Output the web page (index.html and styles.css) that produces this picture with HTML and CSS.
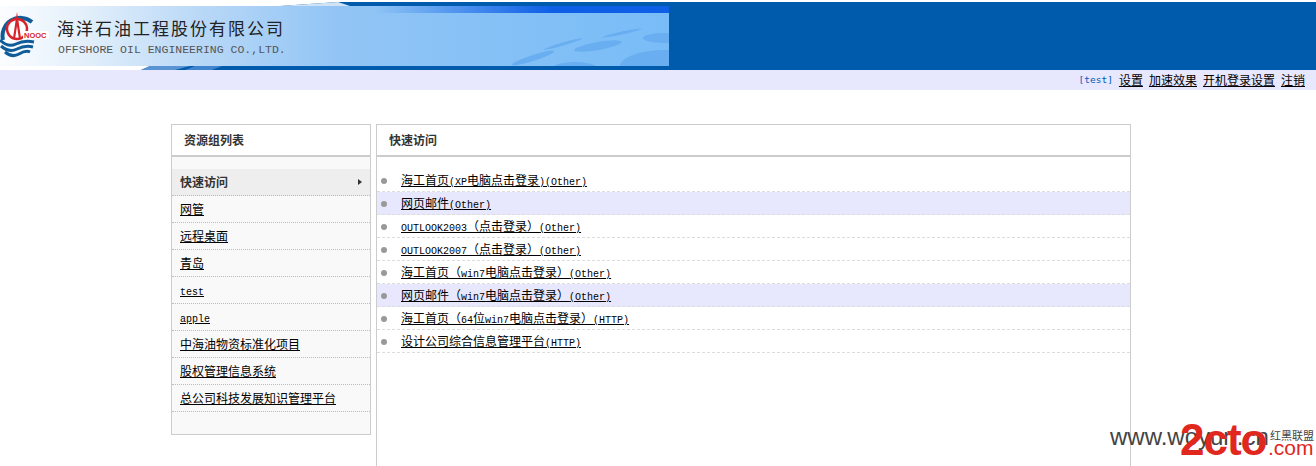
FILE: index.html
```html
<!DOCTYPE html>
<html lang="zh-cn">
<head>
    <meta charset="UTF-8">
    <title>海洋石油工程股份有限公司</title>
    <link rel="stylesheet" href="styles.css">
</head>
<body>
    <header class="top">
        <div class="banner">
            <svg class="banner-art" width="669" height="68" viewBox="0 0 669 68">
                <defs>
                    <linearGradient id="sky" x1="0" x2="1" y1="0" y2="0">
                        <stop offset="0" stop-color="#fbfdff"/>
                        <stop offset="0.12" stop-color="#e4f0fb"/>
                        <stop offset="0.3" stop-color="#b9d8f7"/>
                        <stop offset="0.5" stop-color="#92c5f5"/>
                        <stop offset="1" stop-color="#78bcf7"/>
                    </linearGradient>
                    <linearGradient id="strip" x1="0" x2="1" y1="0" y2="0">
                        <stop offset="0" stop-color="#0f5ee6" stop-opacity="0"/>
                        <stop offset="0.6" stop-color="#0f5ee6"/>
                        <stop offset="1" stop-color="#0f5ee6"/>
                    </linearGradient>
                </defs>
                <path d="M0 0H338L280 4H0Z" fill="#fff"/>
                <path d="M280 4L338 0 350 4Z" fill="#cfe3f5"/>
                <g transform="translate(0 4)">
                    <rect width="669" height="60" fill="url(#sky)"/>
                    <rect x="375" y="0" width="294" height="7" fill="url(#strip)"/>
                    <g fill="#68aef0">
                        <ellipse cx="665" cy="60" rx="45" ry="16"/>
                        <ellipse cx="598" cy="40" rx="24" ry="4" transform="rotate(-10 598 40)"/>
                        <ellipse cx="665" cy="32" rx="22" ry="5"/>
                        <ellipse cx="533" cy="52" rx="22" ry="3" transform="rotate(-18 533 52)"/>
                        <ellipse cx="575" cy="62" rx="22" ry="6"/>
                        <ellipse cx="563" cy="38" rx="20" ry="1.5" transform="rotate(-16 563 38)"/>
                        <ellipse cx="622" cy="27" rx="20" ry="1.5" transform="rotate(-12 622 27)"/>
                    </g>
                    <rect x="0" y="60" width="669" height="4" fill="#005bac"/>
                    <path d="M0 60H150L141 64H0Z" fill="#fff"/>
                    <path d="M150 60H190L175 64H141Z" fill="#5b94d2"/>
                    <path d="M195 60H222L212 64H185Z" fill="#3f84cc"/>
                </g>
            </svg>
            <svg class="logo" width="50" height="48" viewBox="0 0 50 48">
                <path d="M32 10A18 18 0 0 0 3 28" fill="none" stroke="#0f5c99" stroke-width="4"/>
                <circle cx="17" cy="17" r="10" fill="#fff" stroke="#d8232a" stroke-width="2.4"/>
                <path d="M17 0L18.6 10 21 26H18.8L17 14 15.2 26H13L15.4 10Z" fill="#d8232a"/>
                <path d="M0 28Q8 36 16 32T34 30" fill="none" stroke="#0f5c99" stroke-width="3"/>
                <path d="M1 34Q9 41 17 37T33 35" fill="none" stroke="#0f5c99" stroke-width="3"/>
                <path d="M5 40Q12 46 19 42T30 40" fill="none" stroke="#0f5c99" stroke-width="3"/>
                <rect x="23" y="19" width="26" height="8" fill="#fff"/>
                <text x="24" y="26" class="logo-text">NOOC</text>
            </svg>
            <div class="company">
                <div class="company-cn">海洋石油工程股份有限公司</div>
                <div class="company-en">OFFSHORE OIL ENGINEERING CO.,LTD.</div>
            </div>
        </div>
    </header>

    <nav class="userbar">
        <span class="user">[test]</span>
        <a href="#">设置</a>
        <a href="#">加速效果</a>
        <a href="#">开机登录设置</a>
        <a href="#">注销</a>
    </nav>

    <main class="content">
        <aside class="panel side">
            <h3 class="panel-title">资源组列表</h3>
            <ul class="group-list">
                <li class="active"><a href="#">快速访问</a><span class="arrow"></span></li>
                <li><a href="#">网管</a></li>
                <li><a href="#">远程桌面</a></li>
                <li><a href="#">青岛</a></li>
                <li><a href="#" class="en">test</a></li>
                <li><a href="#" class="en">apple</a></li>
                <li><a href="#">中海油物资标准化项目</a></li>
                <li><a href="#">股权管理信息系统</a></li>
                <li><a href="#">总公司科技发展知识管理平台</a></li>
            </ul>
        </aside>
        <section class="panel list">
            <h3 class="panel-title">快速访问</h3>
            <ul class="res-list">
                <li><a href="#">海工首页<span class="en">(XP</span>电脑点击登录<span class="en">)(Other)</span></a></li>
                <li class="alt"><a href="#">网页邮件<span class="en">(Other)</span></a></li>
                <li><a href="#"><span class="en">OUTLOOK2003</span>（点击登录）<span class="en">(Other)</span></a></li>
                <li><a href="#"><span class="en">OUTLOOK2007</span>（点击登录）<span class="en">(Other)</span></a></li>
                <li><a href="#">海工首页（<span class="en">win7</span>电脑点击登录）<span class="en">(Other)</span></a></li>
                <li class="alt"><a href="#">网页邮件（<span class="en">win7</span>电脑点击登录）<span class="en">(Other)</span></a></li>
                <li><a href="#">海工首页（<span class="en">64</span>位<span class="en">win7</span>电脑点击登录）<span class="en">(HTTP)</span></a></li>
                <li><a href="#">设计公司综合信息管理平台<span class="en">(HTTP)</span></a></li>
            </ul>
        </section>
    </main>

    <div class="watermark">
        <span class="wm-url">www.woyun.cn</span>
        <span class="wm-logo">2cto</span>
        <span class="wm-com">.com</span>
        <span class="wm-cn">红黑联盟</span>
    </div>
</body>
</html>
```

FILE: styles.css
```css
html, body {
    height: 466px;
    overflow: hidden;
}
body {
    margin: 0;
    font-family: "Noto Sans CJK SC", "Liberation Mono", sans-serif;
    font-size: 12px;
    color: #000;
    background-color: #fff;
    position: relative;
}
a {
    color: #000;
}
ul {
    list-style: none;
    margin: 0;
    padding: 0;
}
.en {
    font-family: "Liberation Mono", monospace;
    font-size: 10px;
}
.top {
    height: 68px;
    margin-top: 2px;
    background-color: #005bac;
}
.banner {
    width: 669px;
    height: 68px;
    position: relative;
    display: flex;
}
.banner-art {
    position: absolute;
    left: 0;
    top: 0;
}
.logo {
    position: relative;
    flex: none;
    margin: 10px 0 0 0;
}
.logo-text {
    font-family: "Liberation Sans", sans-serif;
    font-weight: bold;
    font-size: 7.5px;
    fill: #d8232a;
}
.company {
    position: relative;
    margin: 14px 0 0 7px;
}
.company-cn {
    font-size: 17px;
    line-height: 24px;
    letter-spacing: 2px;
    color: #222;
}
.company-en {
    font-family: "Liberation Mono", monospace;
    font-size: 11.5px;
    line-height: 14px;
    margin: 3px 0 0 1px;
    color: #555;
}
.userbar {
    box-sizing: border-box;
    height: 20px;
    padding: 0 11px 2px 0;
    background-color: #e7e7fd;
    display: flex;
    justify-content: flex-end;
    align-items: center;
    gap: 6px;
}
.user {
    font-family: "DejaVu Sans Mono", monospace;
    font-size: 9.5px;
    color: #0058c0;
}
.content {
    display: flex;
    align-items: flex-start;
    gap: 5px;
    width: 960px;
    margin: 34px 0 0 171px;
}
.panel {
    box-sizing: border-box;
    border: 1px solid #ccc;
}
.panel-title {
    margin: 0;
    height: 30px;
    line-height: 30px;
    padding-left: 12px;
    font-size: 12px;
    font-weight: bold;
    color: #333;
    border-bottom: 2px solid #ccc;
    background-color: #fff;
}
.side {
    width: 200px;
    height: 311px;
    background-color: #f9f9f9;
}
.group-list {
    margin-top: 12px;
}
.group-list li {
    box-sizing: border-box;
    height: 27px;
    line-height: 26px;
    padding-left: 8px;
    border-bottom: 1px dotted #bbb;
    position: relative;
}
.group-list .active {
    background-color: #eee;
}
.group-list .active a {
    font-weight: bold;
    color: #333;
    text-decoration: none;
}
.arrow {
    position: absolute;
    right: 8px;
    top: 10px;
    border-left: 4px solid #333;
    border-top: 3px solid transparent;
    border-bottom: 3px solid transparent;
}
.list {
    width: 755px;
    height: 342px;
    border-bottom: none;
}
.res-list {
    margin-top: 12px;
}
.res-list li {
    box-sizing: border-box;
    height: 23px;
    line-height: 22px;
    padding-left: 24px;
    border-bottom: 1px dashed #ddd;
    position: relative;
}
.res-list li::before {
    content: "";
    position: absolute;
    left: 4px;
    top: 9px;
    width: 6px;
    height: 6px;
    border-radius: 50%;
    background-color: #999;
}
.res-list .alt {
    background-color: #e7e7fd;
}
.watermark {
    position: absolute;
    left: 1110px;
    top: 420px;
    width: 206px;
    height: 46px;
    font-family: "Liberation Sans", sans-serif;
}
.wm-url {
    position: absolute;
    left: 0;
    top: 3px;
    font-size: 24px;
    color: #444;
}
.wm-logo {
    position: absolute;
    left: 70px;
    top: 0;
    font-size: 44px;
    line-height: 40px;
    letter-spacing: -1px;
    font-weight: bold;
    color: #e0281f;
}
.wm-com {
    position: absolute;
    left: 158px;
    top: 16px;
    font-size: 21px;
    color: #e0281f;
}
.wm-cn {
    position: absolute;
    left: 160px;
    top: 7px;
    font-family: "Noto Sans CJK SC", sans-serif;
    font-size: 11px;
    color: #444;
}
```
